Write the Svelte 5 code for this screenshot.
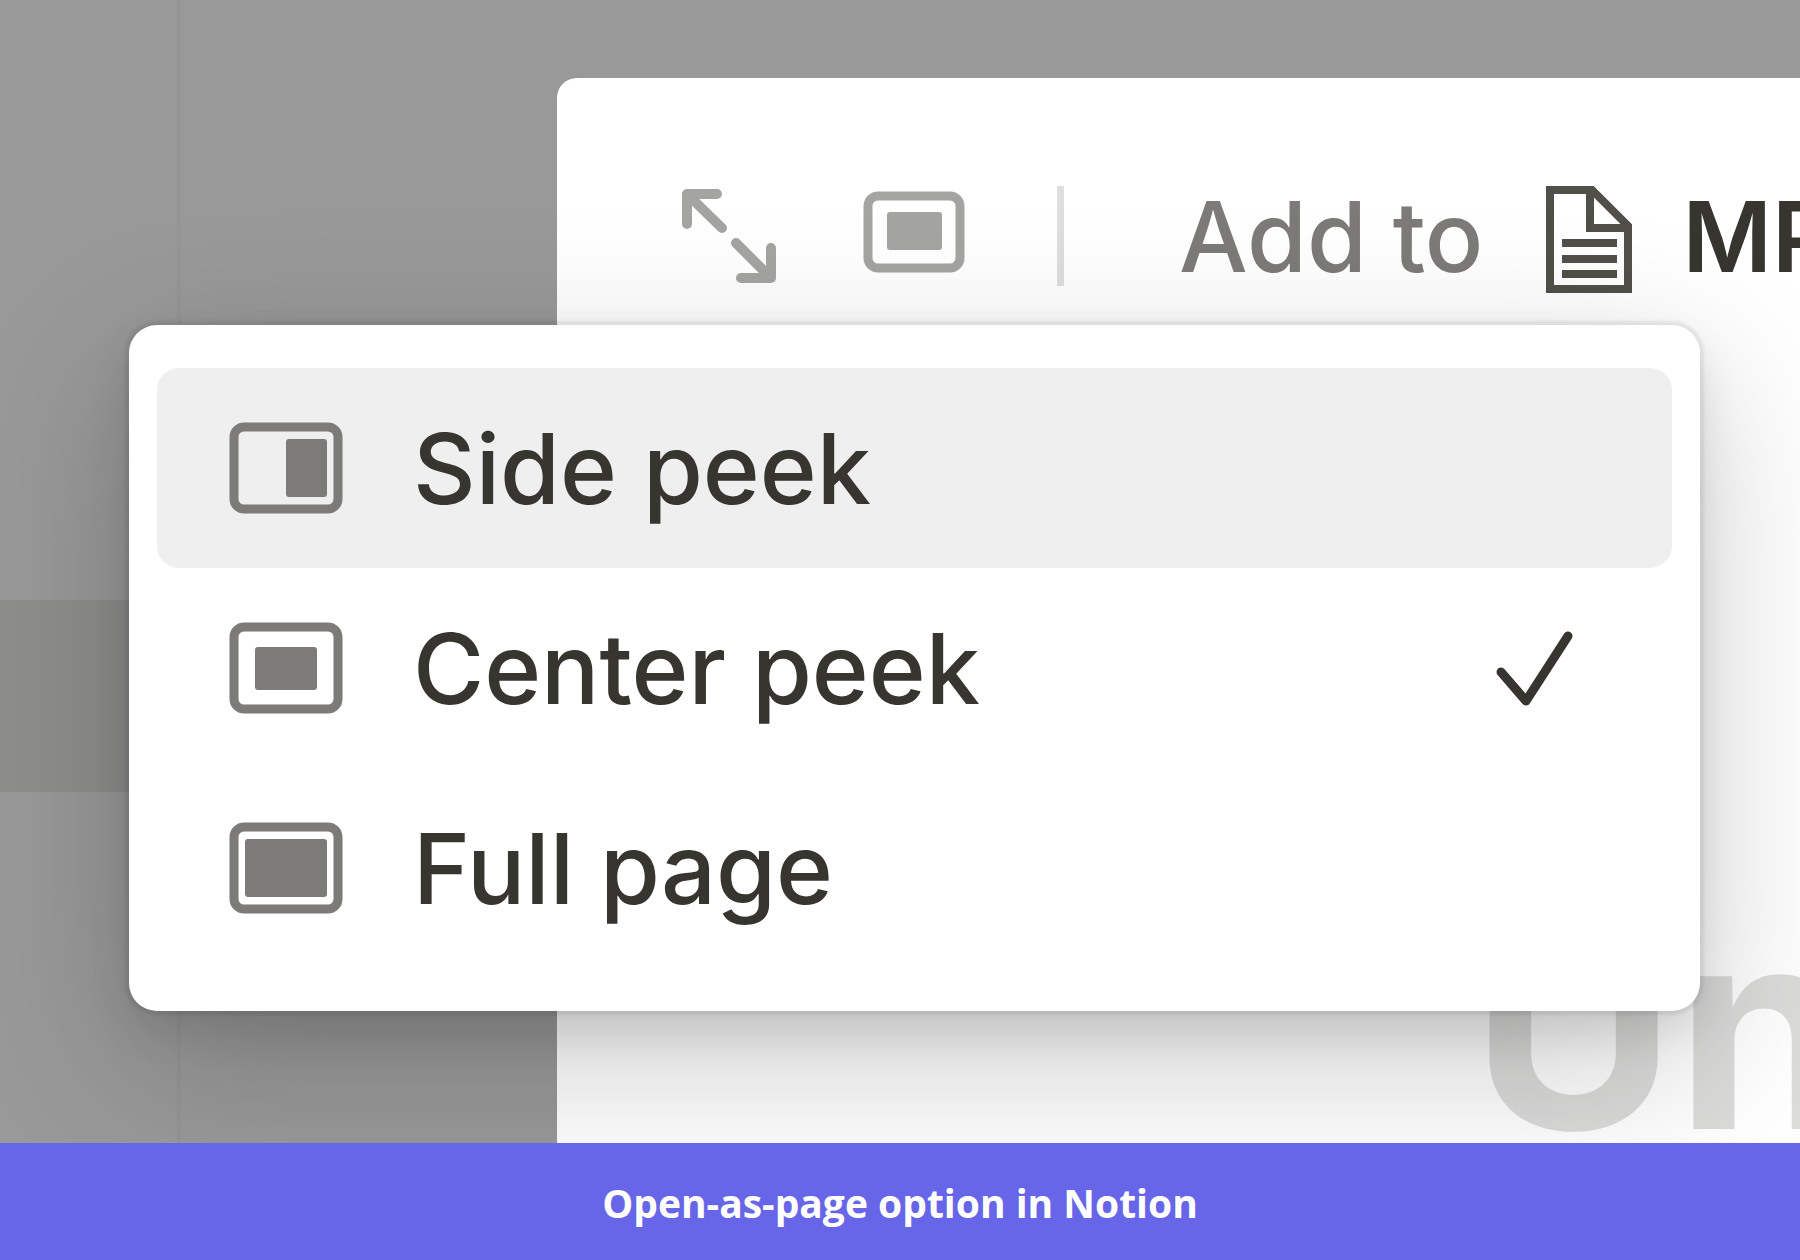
<script>
  let options = [
    { id: "side", label: "Side peek", x: 57, y: 17, width: 41, height: 58 },
    { id: "center", label: "Center peek", x: 26, y: 25, width: 62, height: 43 },
    { id: "full", label: "Full page", x: 16, y: 17, width: 82, height: 58 },
  ];

  let selected = $state("center");
  let highlighted = $state("side");
</script>

<div class="page">
  <main class="stage">
    <!-- dimmed page behind the peek window -->
    <div class="backdrop">
      <div class="column"></div>
      <div class="band"></div>
    </div>

    <section class="peek">
      <header class="toolbar">
        <button class="icon-button" aria-label="Expand">
          <svg width="96" height="96" viewBox="0 0 96 96" class="expand">
            <path d="M6 36V6H36M6 6L41 40M55 55L90 90M60 90H90V60" />
          </svg>
        </button>
        <button class="icon-button mode" aria-label="Open as">
          <svg width="102" height="82" viewBox="0 0 102 82">
            <rect class="frame" x="5" y="5" width="92" height="72" rx="10" />
            <rect class="fill" x="24" y="21" width="55" height="38" rx="3" />
          </svg>
        </button>
        <span class="divider"></span>
        <span class="add">Add to</span>
        <button class="target">
          <svg width="86" height="108" viewBox="0 0 86 108">
            <path d="M4 4H46L82 40V103H4ZM44 4V42H82M16 57H71M16 73H71M16 88H71" />
          </svg>
          MP
        </button>
      </header>
      <h1>Untitled</h1>
    </section>

    <div class="menu" role="menu">
      {#each options as option}
        <button
          class="item"
          class:active={highlighted === option.id}
          role="menuitemradio"
          aria-checked={selected === option.id}
          onmouseenter={() => (highlighted = option.id)}
          onclick={() => (selected = option.id)}
        >
          <svg class="layout" width="114" height="92" viewBox="0 0 114 92">
            <rect class="frame" x="5" y="5" width="104" height="82" rx="10" />
            <rect
              class="fill"
              x={option.x}
              y={option.y}
              width={option.width}
              height={option.height}
              rx="3"
            />
          </svg>
          <span class="label">{option.label}</span>
          {#if selected === option.id}
            <svg class="check" width="78" height="78" viewBox="0 0 78 78">
              <path d="M5 43L30 72L72 7" />
            </svg>
          {/if}
        </button>
      {/each}
    </div>
  </main>

  <footer>Open-as-page option in Notion</footer>
</div>

<style>
  :global(body) {
    margin: 0;
  }

  .page {
    display: flex;
    flex-direction: column;
    min-height: 100vh;
    font-family: Inter, "Liberation Sans", sans-serif;
    color: #37352f;
  }

  button {
    border: 0;
    padding: 0;
    background: none;
    font: inherit;
    color: inherit;
    text-align: left;
    cursor: pointer;
  }

  svg {
    display: block;
    flex: none;
    fill: none;
  }

  .stage {
    position: relative;
    flex: 1;
    display: flex;
    overflow: hidden;
    background: #999;
  }

  .backdrop {
    position: absolute;
    inset: 0;
  }

  .column {
    width: 177px;
    height: 100%;
    border-right: 4px solid #959595;
  }

  .band {
    position: absolute;
    top: 600px;
    width: 177px;
    height: 192px;
    background: #8e8e8d;
  }

  .peek {
    position: relative;
    flex: 1;
    min-width: 0;
    margin: 78px 0 0 557px;
    border-top-left-radius: 20px;
    overflow: hidden;
    background: #fff;
    white-space: nowrap;
  }

  .toolbar {
    display: flex;
    align-items: center;
    height: 316px;
    padding-left: 124px;
    font-size: 97px;
    font-weight: 500;
  }

  .toolbar > * {
    flex: none;
  }

  .icon-button {
    color: #a4a5a0;
  }

  .mode {
    margin: 0 92px 8px 86px;
  }

  .expand,
  .check,
  .target path {
    stroke: currentColor;
  }

  .expand {
    stroke-width: 10;
    stroke-linecap: round;
    stroke-linejoin: round;
  }

  .frame {
    stroke: currentColor;
    stroke-width: 9;
  }

  .fill {
    fill: currentColor;
  }

  .divider {
    width: 7px;
    height: 100px;
    margin-right: 115px;
    background: #dededd;
  }

  .add {
    color: #7c7b77;
  }

  .target {
    display: flex;
    align-items: center;
    gap: 50px;
    margin-left: 63px;
    font-weight: 600;
  }

  .target svg {
    margin-top: 8px;
    color: #504f49;
    stroke-width: 8;
  }

  h1 {
    margin: 484px 0 0 914px;
    height: 265px;
    overflow: hidden;
    font-size: 280px;
    line-height: 300px;
    font-weight: 700;
    color: #dcdcdb;
  }

  .menu {
    position: absolute;
    top: 325px;
    left: 129px;
    right: 100px;
    padding: 43px 28px;
    border-radius: 28px;
    background: #fff;
    box-shadow:
      0 0 3px 4px rgba(15, 15, 15, 0.07),
      0 20px 40px rgba(15, 15, 15, 0.1),
      0 50px 160px rgba(15, 15, 15, 0.22);
  }

  .item {
    display: flex;
    align-items: center;
    width: 100%;
    height: 200px;
    padding: 0 98px 0 72px;
    border-radius: 22px;
    font-size: 97px;
    font-weight: 500;
  }

  .item.active {
    background: #efefef;
  }

  .layout {
    color: #7c7b77;
  }

  .label {
    flex: 1;
    margin-left: 70px;
  }

  .check {
    stroke-width: 9;
    stroke-linecap: round;
    stroke-linejoin: round;
  }

  footer {
    position: relative;
    padding: 33px 32px 31px;
    background: #6765e8;
    color: #fff;
    font-family: "Open Sans", "Noto Sans", sans-serif;
    font-size: 39px;
    line-height: 53px;
    font-weight: 700;
    text-align: center;
  }
</style>
